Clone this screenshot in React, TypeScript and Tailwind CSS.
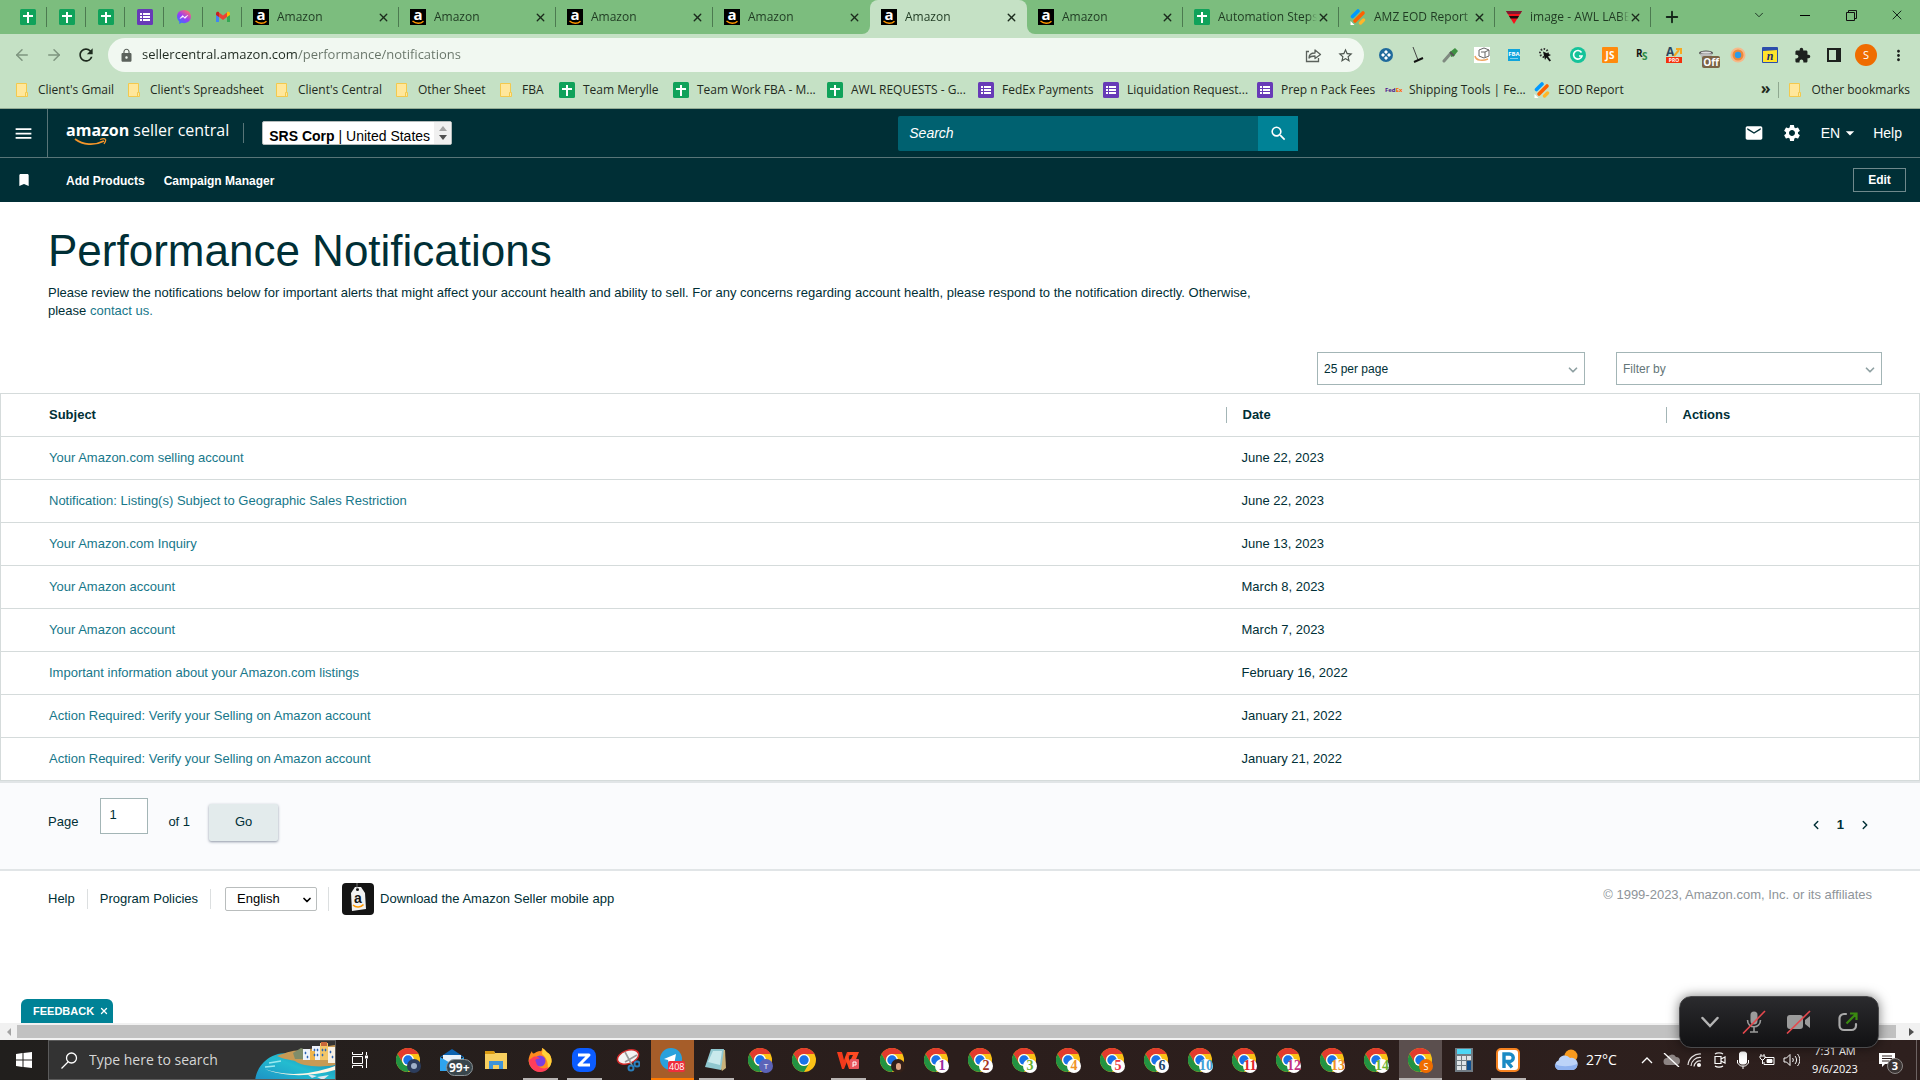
import React from "react";
import {
  MdMail,
  MdSettings,
  MdSearch,
  MdMenu,
  MdBookmark,
  MdLock,
  MdRefresh,
  MdExtension,
  MdMoreVert,
  MdStarBorder,
  MdArrowDropDown,
} from "react-icons/md";
import { ArrowLeft, ArrowRight, ChevronDown, ChevronLeft, ChevronRight, Plus, X } from "lucide-react";

const UI = "font-['Open_Sans','Noto_Sans',sans-serif]";

/* ---------- small marks ---------- */

function SheetIcon() {
  return (
    <svg className="h-4 w-4 shrink-0" viewBox="0 0 16 16" aria-hidden="true">
      <rect width="16" height="16" rx="1.5" fill="#10a25a" />
      <path d="M7 3h2v3h4v2H9v6H7V8H3V6h4z" fill="#fff" />
    </svg>
  );
}

function FormIcon() {
  return (
    <svg className="h-4 w-4 shrink-0" viewBox="0 0 16 16" aria-hidden="true">
      <rect width="16" height="16" rx="1.5" fill="#673ab7" />
      <path d="M3 4h2v2H3zM6 4h7v2H6zM3 7h2v2H3zM6 7h7v2H6zM3 10h2v2H3zM6 10h7v2H6z" fill="#fff" />
    </svg>
  );
}

function MessengerIcon() {
  return (
    <svg className="h-4 w-4 shrink-0" viewBox="0 0 16 16" aria-hidden="true">
      <defs>
        <linearGradient id="msg" x1="0" y1="1" x2="0.7" y2="0">
          <stop offset="0" stopColor="#1a84ff" />
          <stop offset="0.55" stopColor="#9a3cf5" />
          <stop offset="1" stopColor="#ff6a70" />
        </linearGradient>
      </defs>
      <path d="M8 1C4 1 1 3.800 1 7.600c0 2 .9 3.800 2.300 5V15l2.200-1.200c.8.200 1.600.4 2.500.4 4 0 7-2.800 7-6.600S12 1 8 1z" fill="url(#msg)" />
      <path d="M4 9.500l2.600-3 2 1.800 3.200-2-2.700 3.200-2-1.700z" fill="#fff" stroke="#fff" strokeWidth=".5" />
    </svg>
  );
}

function GmailIcon() {
  return (
    <svg className="h-4 w-4 shrink-0" viewBox="0 0 16 16" aria-hidden="true">
      <path d="M1 4v9h3V6z" fill="#4285f4" />
      <path d="M15 4v9h-3V6z" fill="#34a853" />
      <path d="M1 4.500C1 2.800 3 2.300 4 3.200V8L1 6z" fill="#c5221f" />
      <path d="M4 3.500L8 6.600l4-3.100V8L8 11 4 8z" fill="#ea4335" />
      <path d="M15 4.500c0-1.700-2-2.200-3-1.300V8l3-2z" fill="#fbbc04" />
    </svg>
  );
}

function AmazonIcon() {
  return (
    <span className="relative flex h-4 w-4 shrink-0 items-start justify-center bg-black font-['Open_Sans',sans-serif] text-[15px] leading-[10px] font-bold text-white">
      <span aria-hidden="true">a</span>
      <svg className="absolute inset-0" viewBox="0 0 16 16" aria-hidden="true">
        <path d="M2.500 12c3.500 3 8 3 11 .2" stroke="#f90" strokeWidth="1.400" fill="none" />
      </svg>
    </span>
  );
}

function JotformIcon() {
  return (
    <svg className="h-4 w-4 shrink-0" viewBox="0 0 16 16" aria-hidden="true">
      <path d="M2.500 7.500L8 2" stroke="#0099ff" strokeWidth="3.600" strokeLinecap="round" />
      <path d="M5 12l8-8" stroke="#ff6100" strokeWidth="3.600" strokeLinecap="round" />
      <path d="M10.500 14l3-3" stroke="#ffb629" strokeWidth="3.400" strokeLinecap="round" />
      <path d="M.5 12v4h4z" fill="#fff" />
    </svg>
  );
}

function AwlIcon() {
  return (
    <svg className="h-4 w-4 shrink-0" viewBox="0 0 16 16" aria-hidden="true">
      <path d="M0 2h16L8 15z" fill="#f7101c" />
      <path d="M0 2h16l-1.800 3H1.800z" fill="#7b1d32" />
      <path d="M3 7h10l-1.500 2.500h-7z" fill="#1b0b0d" />
    </svg>
  );
}

function FolderMark() {
  return (
    <svg className="h-4 w-4 shrink-0" viewBox="0 0 16 16" aria-hidden="true">
      <path d="M2.500 1.500h10v9h1v4h-11z" fill="#ffe79c" stroke="#f3c94d" />
      <path d="M11.500 14v-3.500h1" stroke="#f3c94d" fill="none" />
    </svg>
  );
}

function FedexIcon() {
  return (
    <span className="flex h-4 w-4 shrink-0 items-center text-[6px] font-bold" aria-hidden="true">
      <span className="text-[#4d148c]">Fed</span>
      <span className="text-[#ff6600]">Ex</span>
    </span>
  );
}

/* ---------- browser ---------- */

const pinned = [SheetIcon, SheetIcon, SheetIcon, FormIcon, MessengerIcon, GmailIcon];

type Tab = { title: string; icon: () => React.ReactElement; w: string; active?: boolean; noLine?: boolean };
const tabs: Tab[] = [
  { title: "Amazon", icon: AmazonIcon, w: "w-[157px]" },
  { title: "Amazon", icon: AmazonIcon, w: "w-[157px]" },
  { title: "Amazon", icon: AmazonIcon, w: "w-[157px]" },
  { title: "Amazon", icon: AmazonIcon, w: "w-[157px]", noLine: true },
  { title: "Amazon", icon: AmazonIcon, w: "w-[157px]", active: true },
  { title: "Amazon", icon: AmazonIcon, w: "w-[156px]" },
  { title: "Automation Steps", icon: SheetIcon, w: "w-[156px]" },
  { title: "AMZ EOD Report", icon: JotformIcon, w: "w-[156px]" },
  { title: "image - AWL LABEL", icon: AwlIcon, w: "w-[156px]" },
];

function TabStrip() {
  return (
    <div className="flex h-[34px] bg-[#7cbd7e] pl-2">
      {pinned.map((Icon, i) => (
        <button key={i} aria-label={`Pinned tab ${i + 1}`} className="flex w-[39px] items-center">
          <span className="flex flex-1 justify-center pl-px">
            <Icon />
          </span>
          <span className="h-5 w-px bg-[#4c7a50]" />
        </button>
      ))}
      {tabs.map((t, i) => (
        <div
          key={i}
          className={`relative flex items-center pl-[11px] ${t.w} ${t.active ? "rounded-t-lg bg-[#c5e1c5]" : ""}`}
        >
          {t.active && (
            <>
              <span className="absolute bottom-0 -left-2 h-2 w-2 bg-[#c5e1c5]">
                <span className="block h-2 w-2 rounded-br-lg bg-[#7cbd7e]" />
              </span>
              <span className="absolute -right-2 bottom-0 h-2 w-2 bg-[#c5e1c5]">
                <span className="block h-2 w-2 rounded-bl-lg bg-[#7cbd7e]" />
              </span>
            </>
          )}
          <t.icon />
          <button className="ml-2 min-w-0 flex-1 overflow-hidden mask-r-from-90% text-left whitespace-nowrap text-[#1f3a22]">
            {t.title}
          </button>
          <button aria-label={`Close ${t.title}`} className="mr-2 text-[#1b2a1c]">
            <X size={13} strokeWidth={2.5} />
          </button>
          <span className={`h-5 w-px ${t.active || t.noLine ? "" : "bg-[#4c7a50]"}`} />
        </div>
      ))}
      <button aria-label="New tab" className="ml-3 text-[#15261a]">
        <Plus size={18} strokeWidth={2.5} />
      </button>
      <div className="ml-auto flex text-[#12251a]">
        <button aria-label="Search tabs" className="flex w-[46px] items-center justify-center pb-1">
          <ChevronDown size={14} strokeWidth={1.5} />
        </button>
        <button aria-label="Minimize" className="flex w-[46px] items-center justify-center pb-1">
          <span className="h-px w-[10px] bg-black" />
        </button>
        <button aria-label="Restore" className="flex w-[46px] items-center justify-center pb-1">
          <svg width="11" height="11" viewBox="0 0 11 11" fill="none" stroke="#111">
            <path d="M.5 2.500h8v8h-8zM2.500 2.500v-2h8v8h-2" />
          </svg>
        </button>
        <button aria-label="Close window" className="flex w-[46px] items-center justify-center pb-1">
          <X size={16} strokeWidth={1.5} />
        </button>
      </div>
    </div>
  );
}

const extensions: { name: string; art: React.ReactNode }[] = [
  {
    name: "Helper",
    art: (
      <>
        <circle cx="8" cy="8" r="7" fill="#1f6a9c" />
        <path d="M8 3l2 2-2 2-2-2zM8 9l2 2-2 2-2-2zM3 8l2-2 2 2-2 2zM9 8l2-2 2 2-2 2z" fill="#fff" />
      </>
    ),
  },
  {
    name: "Broom",
    art: (
      <>
        <path d="M3 0l5 13" stroke="#444" />
        <path d="M4 15l9-4" stroke="#111" strokeWidth="2" />
      </>
    ),
  },
  {
    name: "Picker",
    art: (
      <>
        <path d="M2 14L9 6" stroke="#7f8a80" strokeWidth="3" strokeLinecap="round" />
        <path d="M8 5l5-4 3 3-4 5-3 1z" fill="#3f9142" />
        <path d="M8 5l4 4" stroke="#555" strokeWidth="2" />
      </>
    ),
  },
  {
    name: "Box",
    art: (
      <>
        <rect width="16" height="16" fill="#fff" />
        <path d="M5 3l5-2 5 2v6l-5 2-5-2zM7 5h4v5M11 5l4-2" fill="none" stroke="#666" />
        <path d="M1 9c1 5 8 5 13 3" stroke="#f0a660" strokeWidth="1.500" fill="none" />
      </>
    ),
  },
  {
    name: "FBA",
    art: (
      <>
        <rect x="2" y="2" width="12" height="12" fill="#10a4dc" />
        <text x="8" y="9" fontSize="6" fontWeight="700" fill="#fff" textAnchor="middle">FBA</text>
        <path d="M4 11.500h8" stroke="#7fd0ee" />
      </>
    ),
  },
  {
    name: "Clicker",
    art: (
      <>
        <circle cx="6" cy="6" r="4" fill="none" stroke="#333" strokeWidth="2" strokeDasharray="1.500 1.500" />
        <path d="M5 4.500l8 3.500-3 1.500 3 4-1.500 1-3-4-1.500 2.500z" fill="#111" />
      </>
    ),
  },
  {
    name: "Grammar",
    art: (
      <>
        <circle cx="8" cy="8" r="8" fill="#15c39a" />
        <path d="M11.500 5.500A4.300 4.300 0 1 0 12 9H9" fill="none" stroke="#fff" strokeWidth="1.600" />
      </>
    ),
  },
  {
    name: "Scripts",
    art: (
      <>
        <rect width="16" height="16" rx="1" fill="#ff8a0d" />
        <text x="8" y="12" fontSize="10" fontWeight="700" fill="#fff" textAnchor="middle">JS</text>
      </>
    ),
  },
  {
    name: "RS",
    art: (
      <>
        <text x="2" y="10" fontSize="10" fontWeight="700" fill="#111">R</text>
        <text x="8" y="13" fontSize="10" fontWeight="700" fill="#2c8c46">S</text>
      </>
    ),
  },
  {
    name: "Pro",
    art: (
      <>
        <text x="0" y="9" fontSize="12" fontWeight="700" fill="#2b4660">A</text>
        <path d="M8 9l5-6M10 2h5v5" stroke="#f6a821" strokeWidth="2" fill="none" />
        <rect y="10" width="16" height="6" fill="#f4300c" />
        <text x="8" y="15" fontSize="5" fontWeight="700" fill="#fff" textAnchor="middle">PRO</text>
      </>
    ),
  },
  {
    name: "Blocker",
    art: (
      <>
        <ellipse cx="8" cy="6" rx="7" ry="2.500" fill="#555" />
        <path d="M2 6.500h12l-1 6H4z" fill="#bcbcbc" />
        <ellipse cx="8" cy="5.500" rx="5" ry="1" fill="#ddd" />
      </>
    ),
  },
  {
    name: "Sphere",
    art: (
      <>
        <circle cx="8" cy="8" r="7.500" fill="#f6b98a" />
        <circle cx="8" cy="8" r="5.500" fill="#ef8a3a" />
        <circle cx="8" cy="8" r="3.200" fill="#2d9be8" />
      </>
    ),
  },
  {
    name: "Notes",
    art: (
      <>
        <rect width="16" height="16" rx="1" fill="#2b4dab" />
        <path d="M1 4l14-1v12H1z" fill="#ffe32b" />
        <text x="8" y="13" fontSize="12" fontWeight="700" fontStyle="italic" fill="#1c2b70" textAnchor="middle" fontFamily="Liberation Serif">n</text>
      </>
    ),
  },
];

function Toolbar() {
  return (
    <div className="flex h-[38px] items-center bg-[#c5e1c5]">
      <button aria-label="Back" className="mt-[3px] ml-[13px] text-[#7e957f]"><ArrowLeft size={18} /></button>
      <button aria-label="Forward" className="mt-[3px] ml-[14px] text-[#7e957f]"><ArrowRight size={18} /></button>
      <button aria-label="Reload" className="mt-[3px] ml-[13px] text-[#1d2a1e]"><MdRefresh size={20} /></button>
      <div className="mt-1 ml-3 flex h-[34px] min-w-0 flex-1 items-center rounded-full bg-[#f1f8f1] pr-[10px] pl-[11px]">
        <MdLock size={15} className="text-[#5b625c]" />
        <input
          aria-label="Address"
          className="ml-2 min-w-0 flex-1 bg-[linear-gradient(90deg,#1f2a20_156px,#667367_156px)] bg-clip-text text-[13px] text-transparent"
          defaultValue="sellercentral.amazon.com/performance/notifications"
        />
        <button aria-label="Share" className="mr-[15px]">
          <svg width="17" height="16" viewBox="0 0 17 16" fill="none" stroke="#5b625c" strokeWidth="1.300">
            <path d="M4 4.500H1.500v10h12V11" />
            <path d="M4 11c0-3.500 2.500-5 6-5V3l5.500 4.500L10 11.500V9c-3 0-4.500 0-6 2z" strokeLinejoin="round" />
          </svg>
        </button>
        <button aria-label="Bookmark this page"><MdStarBorder size={17} className="text-[#4c544d]" /></button>
      </div>
      <div className="mt-1 ml-[6px] flex">
        {extensions.map((e) => (
          <button key={e.name} aria-label={e.name} className="relative flex w-8 justify-center">
            <svg width="16" height="16" viewBox="0 0 16 16">{e.art}</svg>
            {e.name === "Blocker" && (
              <span className="absolute top-[9px] right-[2px] rounded-xs bg-[#7b6446] px-px text-[10px] leading-3 font-bold text-white">
                Off
              </span>
            )}
          </button>
        ))}
        <button aria-label="Extensions" className="flex w-8 justify-center"><MdExtension size={17} className="text-[#1d211e]" /></button>
        <button aria-label="Side panel" className="flex w-8 justify-center">
          <span className="mt-px h-[14px] w-[14px] border-2 border-r-[5px] border-[#1d211e]" />
        </button>
        <button aria-label="Profile" className="flex w-8 items-center justify-center">
          <span className="-my-1 flex h-[22px] w-[22px] items-center justify-center rounded-full bg-[#ef6c00] text-[11px] text-white">S</span>
        </button>
        <button aria-label="Menu" className="mr-[6px] flex w-8 justify-center"><MdMoreVert size={17} className="text-[#1d211e]" /></button>
      </div>
    </div>
  );
}

const bookmarks: { label: string; icon: () => React.ReactElement; w: string }[] = [
  { label: "Client's Gmail", icon: FolderMark, w: "w-[112px]" },
  { label: "Client's Spreadsheet", icon: FolderMark, w: "w-[148px]" },
  { label: "Client's Central", icon: FolderMark, w: "w-[120px]" },
  { label: "Other Sheet", icon: FolderMark, w: "w-[104px]" },
  { label: "FBA", icon: FolderMark, w: "w-[61px]" },
  { label: "Team Merylle", icon: SheetIcon, w: "w-[114px]" },
  { label: "Team Work FBA - M...", icon: SheetIcon, w: "w-[154px]" },
  { label: "AWL REQUESTS - G...", icon: SheetIcon, w: "w-[151px]" },
  { label: "FedEx Payments", icon: FormIcon, w: "w-[125px]" },
  { label: "Liquidation Request...", icon: FormIcon, w: "w-[154px]" },
  { label: "Prep n Pack Fees", icon: FormIcon, w: "w-[128px]" },
  { label: "Shipping Tools | Fe...", icon: FedexIcon, w: "w-[149px]" },
  { label: "EOD Report", icon: JotformIcon, w: "w-[110px]" },
];

function BookmarksBar() {
  return (
    <div className="flex h-[37px] items-center border-b border-[#93ab94] bg-[#c5e1c5] pl-[14px] text-[#1f2a20]">
      {bookmarks.map((b) => (
        <a key={b.label} href="#" className={`flex items-center gap-2 whitespace-nowrap ${b.w}`}>
          <b.icon />
          {b.label}
        </a>
      ))}
      <button aria-label="More bookmarks" className="ml-auto pb-1 text-base leading-4 font-bold">»</button>
      <span className="mx-2 h-4 w-px bg-[#8fa890]" />
      <a href="#" className="mr-[10px] flex items-center gap-2">
        <FolderMark />
        Other bookmarks
      </a>
    </div>
  );
}

/* ---------- seller central ---------- */

function SiteHeader() {
  return (
    <header className="bg-[#002f36] text-white">
      <div className="flex h-[49px] items-center border-b border-[#587578]">
        <button aria-label="Menu" className="flex h-12 w-12 items-center justify-center border-r border-[#587578]">
          <MdMenu size={21} />
        </button>
        <a href="#" aria-label="amazon seller central" className="ml-[18px] flex h-6 items-start gap-1 font-['Open_Sans',sans-serif] text-base leading-[18px] whitespace-nowrap">
          <span className="relative font-bold">
            amazon
            <svg className="absolute top-[17px] left-2" width="36" height="8" viewBox="0 0 36 8" fill="none" stroke="#f5962a" strokeWidth="1.800">
              <path d="M1 1c8 6 19 7 29 2" />
              <path d="M26 1.500c3-1 5-.8 5.500 0s-.5 3-1.500 4.500" strokeWidth="1.300" />
            </svg>
          </span>
          <span>seller central</span>
        </a>
        <span className="ml-[14px] h-5 w-px bg-[#587578]" />
        <button className="ml-[18px] flex h-6 w-[190px] overflow-hidden rounded-xs border border-[#b5bcbc] bg-white text-left text-sm text-black">
          <span className="mt-[6px] flex-1 pl-[6px] leading-4 whitespace-nowrap">
            <b>SRS Corp</b> | United States
          </span>
          <span className="flex w-[17px] flex-col items-center justify-center gap-1 bg-[#f0f0f0]">
            <svg width="8" height="5" viewBox="0 0 8 5"><path d="M0 5l4-5 4 5z" fill="#a3a3a3" /></svg>
            <svg width="8" height="5" viewBox="0 0 8 5"><path d="M0 0l4 5 4-5z" fill="#505050" /></svg>
          </span>
        </button>
        <form className="ml-[446px] flex h-[35px] w-[400px]" onSubmit={(e) => e.preventDefault()}>
          <input
            aria-label="Search"
            placeholder="Search"
            className="min-w-0 flex-1 rounded-l-xs bg-[#006170] pl-[11px] text-sm placeholder:text-white placeholder:italic"
          />
          <button aria-label="Submit search" className="flex w-10 items-center justify-center bg-[#008296]">
            <MdSearch size={19} />
          </button>
        </form>
        <div className="mr-[18px] ml-auto flex items-center text-sm">
          <button aria-label="Messages"><MdMail size={20} /></button>
          <button aria-label="Settings" className="ml-[18px]"><MdSettings size={20} /></button>
          <button className="ml-[19px] flex items-center">
            EN <MdArrowDropDown size={20} />
          </button>
          <a href="#" className="ml-[13px]">Help</a>
        </div>
      </div>
      <nav className="flex h-[44px] items-center text-xs font-bold">
        <button aria-label="Bookmarks" className="ml-4"><MdBookmark size={16} /></button>
        <a href="#" className="mt-px ml-[34px]">Add Products</a>
        <a href="#" className="mt-px ml-[19px]">Campaign Manager</a>
        <button className="mr-[14px] ml-auto h-6 w-[53px] border border-[#6f898c]">Edit</button>
      </nav>
    </header>
  );
}

const rows = [
  ["Your Amazon.com selling account", "June 22, 2023"],
  ["Notification: Listing(s) Subject to Geographic Sales Restriction", "June 22, 2023"],
  ["Your Amazon.com Inquiry", "June 13, 2023"],
  ["Your Amazon account", "March 8, 2023"],
  ["Your Amazon account", "March 7, 2023"],
  ["Important information about your Amazon.com listings", "February 16, 2022"],
  ["Action Required: Verify your Selling on Amazon account", "January 21, 2022"],
  ["Action Required: Verify your Selling on Amazon account", "January 21, 2022"],
];

function PickBox({ label, options, tone, className }: { label: string; options: string[]; tone: string; className: string }) {
  return (
    <div className={`relative ${className}`}>
      <select aria-label={label} className={`h-[33px] w-full appearance-none border border-[#a3b5b6] bg-white pl-[6px] text-xs ${tone}`}>
        {options.map((o) => (
          <option key={o}>{o}</option>
        ))}
      </select>
      <ChevronDown size={14} strokeWidth={3} className="pointer-events-none absolute top-[11px] right-[5px] text-[#8fa1a3]" />
    </div>
  );
}

function Content() {
  return (
    <main className="text-[13px] text-[#002f36]">
      <div className="px-12 pt-[21px]">
        <h1 className="text-[44px] leading-[56px]">Performance Notifications</h1>
        <p className="mt-[5px] max-w-[1225px] leading-[18px]">
          Please review the notifications below for important alerts that might affect your account health and ability to
          sell. For any concerns regarding account health, please respond to the notification directly. Otherwise, please{" "}
          <a href="#" className="text-[#17778a]">contact us.</a>
        </p>
      </div>
      <div className="mt-8 mr-[38px] flex justify-end gap-[31px]">
        <PickBox label="Results per page" options={["25 per page", "50 per page"]} tone="text-[#002f36]" className="w-[268px]" />
        <PickBox label="Filter" options={["Filter by"]} tone="text-[#647678]" className="w-[266px]" />
      </div>
      <table className="mt-2 w-full table-fixed border-collapse border border-[#d5dbdb] text-left">
        <thead>
          <tr className="h-[43px] border-b border-[#d5dbdb]">
            <th className="pl-12">Subject</th>
            <th className="w-[440px]"><span className="block border-l border-[#a3b5b6] pl-4 leading-4">Date</span></th>
            <th className="w-[254px]"><span className="block border-l border-[#a3b5b6] pl-4 leading-4">Actions</span></th>
          </tr>
        </thead>
        <tbody>
          {rows.map(([subject, date], i) => (
            <tr key={i} className="h-[43px] border-b border-[#d5dbdb]">
              <td className="pl-12"><a href="#" className="text-[#17778a]">{subject}</a></td>
              <td className="pl-4">{date}</td>
              <td />
            </tr>
          ))}
        </tbody>
      </table>
      <form className="flex h-[90px] items-center border-y-2 border-[#e1e5e7] bg-[#fafbfd] px-12 pb-2" onSubmit={(e) => e.preventDefault()}>
        <label htmlFor="page">Page</label>
        <input id="page" defaultValue="1" className="mb-3 ml-[22px] h-9 w-12 border border-[#a3b5b6] bg-white pb-1 pl-2" />
        <span className="ml-5">of 1</span>
        <button className="ml-[19px] h-[37px] w-[69px] rounded-xs bg-[#e3ebec] shadow-sm shadow-gray-400">Go</button>
        <div className="mt-[6px] ml-auto flex items-center gap-[14px]">
          <button type="button" aria-label="Previous page"><ChevronLeft size={14} strokeWidth={2.500} /></button>
          <b>1</b>
          <button type="button" aria-label="Next page"><ChevronRight size={14} strokeWidth={2.500} /></button>
        </div>
      </form>
      <footer className="flex items-center px-12 pt-3">
        <a href="#">Help</a>
        <span className="mx-3 h-5 w-px bg-[#dcdfe0]" />
        <a href="#">Program Policies</a>
        <span className="mx-3 h-5 w-px bg-[#dcdfe0]" />
        <div className="relative ml-[2px]">
          <select aria-label="Language" className="h-6 w-[92px] appearance-none rounded-xs border border-[#b9bdbd] bg-white pl-[11px] text-[13px] text-black">
            <option>English</option>
          </select>
          <ChevronDown size={12} strokeWidth={3.500} className="pointer-events-none absolute top-[7px] right-1 text-black" />
        </div>
        <span className="mx-[11px] h-6 w-px bg-[#dcdfe0]" />
        <a href="#" className="ml-[2px] flex items-center gap-[6px]">
          <span className="flex h-8 w-8 items-center justify-center rounded-sm bg-[#141414]">
            <svg width="32" height="32" viewBox="0 0 32 32" aria-hidden="true">
              <path d="M9 10l4-6h6l4 6 1 16-14 2z" fill="#f2f2f2" />
              <circle cx="15.500" cy="6.500" r="1.500" fill="#141414" />
              <path d="M15 0v6" stroke="#8a8a8a" strokeWidth=".8" />
              <text x="16" y="20" fontSize="14" fontWeight="700" textAnchor="middle" fill="#141414">a</text>
              <path d="M11 22c3 3 8 2.500 10.500-.5" stroke="#f90" strokeWidth="1.500" fill="none" />
            </svg>
          </span>
          Download the Amazon Seller mobile app
        </a>
        <span className="mb-2 ml-auto text-[#8e9499]">© 1999-2023, Amazon.com, Inc. or its affiliates</span>
      </footer>
    </main>
  );
}

/* ---------- taskbar ---------- */

function Chrome() {
  return (
    <svg width="24" height="24" viewBox="0 0 24 24" aria-hidden="true">
      <circle cx="12" cy="12" r="12" fill="#fbc116" />
      <path d="M1.600 6A12 12 0 0 1 22.400 6H12a6 6 0 0 0-5.200 9z" fill="#e33b2e" />
      <path d="M1.600 6A12 12 0 0 0 12 24l5.200-9A6 6 0 0 1 6.800 15z" fill="#229342" />
      <circle cx="12" cy="12" r="6" fill="#fff" />
      <circle cx="12" cy="12" r="4.700" fill="#1a73e8" />
    </svg>
  );
}

function ChromeWith({ children, badge }: { children?: React.ReactNode; badge: string }) {
  return (
    <span className="relative block h-6 w-6">
      <Chrome />
      <span className={`absolute -right-px -bottom-px flex h-[14px] w-[14px] items-center justify-center rounded-full leading-none ${badge}`}>
        {children}
      </span>
    </span>
  );
}

function Num({ n, tone }: { n: string; tone: string }) {
  return (
    <ChromeWith badge="bg-white">
      <span className={`font-['Liberation_Serif',serif] text-[14px] font-bold ${tone}`}>{n}</span>
    </ChromeWith>
  );
}

type Task = { name: string; art: React.ReactNode; line?: string; bg?: string };
const tasks: Task[] = [
  {
    name: "Chrome profile",
    art: (
      <ChromeWith badge="bg-[#2c3d5d]">
        <span className="h-[6px] w-[6px] rounded-full bg-[#9fb1c9]" />
      </ChromeWith>
    ),
  },
  {
    name: "Mail",
    art: (
      <span className="relative block">
        <svg width="24" height="24" viewBox="0 0 24 24">
          <path d="M0 9l12-8 12 8z" fill="#0d63b0" />
          <path d="M3 7h18v9H3z" fill="#e9f2fa" />
          <path d="M0 9l12 7 12-7v14H0z" fill="#2fa4ee" />
        </svg>
        <span className="absolute top-[11px] left-[6px] rounded-full border border-[#8b9296] bg-[#39464c] px-[2px] text-[12px] leading-[15px] font-bold text-white">
          99+
        </span>
      </span>
    ),
  },
  {
    name: "File Explorer",
    art: (
      <svg width="24" height="24" viewBox="0 0 24 24">
        <path d="M1 3h9l1 2h12v16H1z" fill="#f7cf5f" />
        <path d="M1 3h9l1 3H1z" fill="#d99a12" />
        <path d="M5 21v-8h14v8h-4v-4H9v4z" fill="#3e93d8" />
      </svg>
    ),
  },
  {
    name: "Firefox",
    line: "bg-[#b8b4b3]",
    art: (
      <svg width="24" height="24" viewBox="0 0 24 24">
        <path d="M12 3c2 1 2-2 2-3 4 2 4 4 6 5 2 1 4 5 3.500 9A11.600 11.600 0 0 1 .5 13C.5 9 2 6 4 3c0 2 1 3 3 2 1-1 3-2 5-2z" fill="#ff8a1e" />
        <path d="M14 0c4 2 4 4 6 5 2 1 4 5 3.500 9-.4 3-2 5-4 7 1-4 0-11-5.500-15 0-2 1-4 0-6z" fill="#ffd23a" />
        <circle cx="12" cy="13" r="5.500" fill="#7a3fe0" />
        <path d="M1 12c0 6 4 12 11 12s9-5 9-5c-5 3-12 1-13-5-2-3 2-4 4-3-2-3-6-3-8-1z" fill="#ff3d5a" />
      </svg>
    ),
  },
  {
    name: "Zoom",
    line: "bg-[#b8b4b3]",
    art: (
      <svg width="24" height="24" viewBox="0 0 24 24">
        <rect width="24" height="24" rx="8" fill="#0b5cff" />
        <path d="M6 7h11L7 17h11" stroke="#fff" strokeWidth="3" fill="none" strokeLinejoin="round" />
      </svg>
    ),
  },
  {
    name: "Snipping Tool",
    art: (
      <svg width="24" height="24" viewBox="0 0 24 24">
        <ellipse cx="12" cy="9" rx="11" ry="6.500" transform="rotate(-20 12 9)" fill="#f4f4f4" stroke="#d22a2a" strokeWidth="1.500" />
        <path d="M9 4l7 13M21 7L9 14" stroke="#9a9a9a" strokeWidth="1.600" />
        <circle cx="15" cy="20" r="2.500" fill="none" stroke="#2a7fbd" strokeWidth="2" />
        <circle cx="21" cy="16" r="2.500" fill="none" stroke="#2a7fbd" strokeWidth="2" />
      </svg>
    ),
  },
  {
    name: "Telegram",
    bg: "bg-[#a65d29]",
    line: "bg-[#ff7a00]",
    art: (
      <span className="relative block">
        <svg width="24" height="24" viewBox="0 0 24 24">
          <circle cx="11" cy="11" r="11" fill="#2aa1dc" />
          <path d="M4 11l12-5-2 11-4-3-1 2-1-4z" fill="#fff" />
        </svg>
        <span className="absolute top-[13px] left-2 rounded-xs bg-[#ee2f3c] px-px text-[9px] leading-[11px] text-white">408</span>
      </span>
    ),
  },
  {
    name: "Notepad",
    line: "bg-[#b8b4b3]",
    art: (
      <svg width="24" height="24" viewBox="0 0 24 24">
        <path d="M8 2h13l1 18-4 3z" fill="#c9b27a" />
        <path d="M7 1h13l-3 21-16-3z" fill="#8fc7cf" />
        <path d="M9 3h9l-2 14-12-3z" fill="#c9e9ec" />
      </svg>
    ),
  },
  {
    name: "Chrome T",
    art: <ChromeWith badge="bg-[#5c63b8] text-[8px] text-white">T</ChromeWith>,
  },
  { name: "Chrome", art: <Chrome /> },
  {
    name: "WPS",
    line: "bg-[#b8b4b3]",
    art: (
      <svg width="24" height="24" viewBox="0 0 24 24">
        <path d="M1 4h5l2 8 3-8h4l-7 17H6z" fill="#f33a1c" />
        <path d="M12 4h11l-7 17h-3L9 10l2-4 3 7 3-6h-5z" fill="#ff4a22" />
        <rect x="14" y="11" width="9" height="10" rx="1" fill="#e9545c" />
        <path d="M17 19v-5h3v3h-3" stroke="#fff" fill="none" />
      </svg>
    ),
  },
  {
    name: "Chrome photo",
    art: (
      <ChromeWith badge="bg-[#33201a]">
        <span className="h-[7px] w-[5px] rounded-full bg-[#e0a684]" />
      </ChromeWith>
    ),
  },
  { name: "Chrome 1", art: <Num n="1" tone="text-[#9b2a9e]" /> },
  { name: "Chrome 2", art: <Num n="2" tone="text-[#a8321d]" /> },
  { name: "Chrome 3", art: <Num n="3" tone="text-[#6cb22e]" /> },
  { name: "Chrome 4", art: <Num n="4" tone="text-[#f09326]" /> },
  { name: "Chrome 5", art: <Num n="5" tone="text-[#ea3340]" /> },
  { name: "Chrome 6", art: <Num n="6" tone="text-[#23466b]" /> },
  { name: "Chrome 10", art: <Num n="10" tone="text-[#3f9fd6]" /> },
  { name: "Chrome 11", art: <Num n="11" tone="text-[#e3262b]" /> },
  { name: "Chrome 12", art: <Num n="12" tone="text-[#c42f83]" /> },
  { name: "Chrome 13", art: <Num n="13" tone="text-[#f09326]" /> },
  { name: "Chrome 14", art: <Num n="14" tone="text-[#6cb22e]" /> },
  {
    name: "Chrome S",
    bg: "bg-[#5b4f4e]",
    line: "bg-[#b8b4b3]",
    art: <ChromeWith badge="bg-[#ef6c00] text-[9px] text-white">S</ChromeWith>,
  },
  {
    name: "Calculator",
    art: (
      <svg width="18" height="24" viewBox="0 0 18 24">
        <rect width="18" height="24" fill="#717b83" />
        <rect x="2" y="1" width="14" height="5" fill="#4cd6f5" />
        <path d="M2 8h4v4H2zM7 8h4v4H7zM12 8h4v4h-4zM2 13h4v4H2zM7 13h4v4H7zM2 18h4v4H2zM7 18h4v4H7z" fill="#dfe4e8" />
        <rect x="12" y="13" width="4" height="9" fill="#0f4f8f" />
      </svg>
    ),
  },
  {
    name: "R app",
    line: "bg-[#b8b4b3]",
    art: (
      <svg width="24" height="24" viewBox="0 0 24 24">
        <rect x="1" y="1" width="22" height="22" rx="4" fill="#fff" stroke="#f58220" strokeWidth="2" />
        <path d="M8 20V6h5.500a3.500 3.500 0 0 1 0 7.500H11l5 6" stroke="#1a8ac4" strokeWidth="3.400" fill="none" />
      </svg>
    ),
  },
];

function HarborArt() {
  return (
    <svg className="h-full w-20" viewBox="0 0 80 38" preserveAspectRatio="none" aria-hidden="true">
      <defs>
        <linearGradient id="sea" x1="0" y1="1" x2="1" y2="0">
          <stop offset="0" stopColor="#1d8fc4" />
          <stop offset="0.5" stopColor="#23bcd0" />
          <stop offset="1" stopColor="#1577ad" />
        </linearGradient>
      </defs>
      <path d="M0 40C2 24 14 12 32 12l48-2v30z" fill="url(#sea)" />
      <path d="M22 15c10-4 18-6 26-6l32-5v20c-16 3-34 1-40-4-4-1-12-2-18-5z" fill="#c79a55" />
      <path d="M38 12l8-5 10 4-2 7H40z" fill="#7f8d6b" />
      <path d="M48 8h7v11h-7zM57 5h8v14h-8z" fill="#eef3fa" />
      <path d="M55 10h5v9h-5z" fill="#f0b54c" />
      <path d="M65 2h8v17h-8z" fill="#f2c668" />
      <path d="M73 6h7v16h-7z" fill="#f7f0e2" />
      <path d="M66 1h6v4h-6z" fill="#c9683a" />
      <path d="M59 8h1v2h-1zM62 8h1v2h-1zM59 13h1v2h-1zM62 13h1v2h-1zM50 11h1v2h-1zM52 15h1v2h-1zM67 8h1v2h-1zM70 8h1v2h-1zM67 13h1v2h-1zM75 10h1v2h-1zM77 15h1v2h-1z" fill="#2f66b5" stroke="#2f66b5" strokeWidth=".5" />
      <path d="M10 28c16 6 40 8 70-3v4c-24 7-52 7-70-1z" fill="#fff7e6" />
      <path d="M52 33l10 2-5 2zM62 36l12-2-6 5z" fill="#dbe8ef" />
      <path d="M14 22l12-2M10 26l10-1" stroke="#9be9f0" strokeWidth="1.500" />
    </svg>
  );
}

const tray: { name: string; art: React.ReactElement }[] = [
  {
    name: "Show hidden icons",
    art: <svg width="12" height="12" viewBox="0 0 12 12" fill="none" stroke="#fff" strokeWidth="1.300"><path d="M1 9l5-5 5 5" /></svg>,
  },
  {
    name: "Cloud storage",
    art: (
      <svg width="17" height="14" viewBox="0 0 17 14">
        <path d="M4 12a3.500 3.500 0 0 1 0-7 5 5 0 0 1 9-1 4 4 0 0 1 0 8z" fill="#8d8584" />
        <path d="M1 0l15 14" stroke="#fff" strokeWidth="1.300" />
      </svg>
    ),
  },
  {
    name: "Network",
    art: (
      <svg width="16" height="16" viewBox="0 0 16 16" fill="none" stroke="#e9e5e4" strokeWidth="1.200">
        <path d="M1 13A12 12 0 0 1 14 2M4 14A9 9 0 0 1 14 5.500M7 14.500A6 6 0 0 1 14 9" />
        <circle cx="12" cy="13" r="1.500" fill="#fff" />
      </svg>
    ),
  },
  {
    name: "Meet now",
    art: (
      <svg width="14" height="16" viewBox="0 0 14 16" fill="none" stroke="#fff" strokeWidth="1.200">
        <path d="M3 4.500h6v7H3zM9 7l4-2v6L9 9M3 2c2-1.500 6-1.500 8 0M3 14c2 1.500 6 1.500 8 0" />
      </svg>
    ),
  },
  {
    name: "Microphone",
    art: (
      <svg width="16" height="18" viewBox="0 0 16 18" fill="none" stroke="#fff">
        <rect x="4.500" y="1" width="7" height="12" rx="2" fill="#fff" />
        <path d="M2.500 9v3l3 3h5l3-3V9M8 15v3" />
      </svg>
    ),
  },
  {
    name: "Battery",
    art: (
      <svg width="17" height="14" viewBox="0 0 17 14" fill="none" stroke="#fff">
        <path d="M6 4.500h9v7H5V9" />
        <path d="M8 6.500h5v3H8z" fill="#fff" />
        <path d="M1 3h5v2L4 7H3L1 5zM2 1v2M5 1v2M3.500 7v4" />
      </svg>
    ),
  },
  {
    name: "Volume",
    art: (
      <svg width="17" height="14" viewBox="0 0 17 14" fill="none" stroke="#fff">
        <path d="M1 5h2.500L7 1.500v11L3.500 9H1zM9.500 5c1 1.200 1 2.800 0 4M12 3c2 2.400 2 5.600 0 8M14.500 1c3 3.600 3 8.400 0 12" />
      </svg>
    ),
  },
];

function Taskbar() {
  return (
    <div className="flex h-10 bg-linear-to-r from-[#211f1d] via-[#2b1e1c] to-[#2e201e] text-white">
      <button aria-label="Start" className="flex w-12 shrink-0 items-center justify-center">
        <svg width="16" height="16" viewBox="0 0 16 16">
          <path d="M0 2l6.500-1v6.500H0zM7.500 1L16 0v7.500H7.500zM0 8.500h6.500V15L0 14zM7.500 8.500H16V16l-8.500-1z" fill="#fff" />
        </svg>
      </button>
      <label className="flex w-72 shrink-0 items-center border border-[#5b5b5b] bg-[#333] pl-3">
        <svg width="17" height="17" viewBox="0 0 17 17" fill="none" stroke="#fff" strokeWidth="1.300">
          <circle cx="10.500" cy="6" r="5" />
          <path d="M7 10l-6.500 6.500" />
        </svg>
        <input
          aria-label="Type here to search"
          placeholder="Type here to search"
          className="ml-[11px] w-0 flex-1 bg-transparent text-sm placeholder:text-[#d6d6d6]"
        />
        <HarborArt />
      </label>
      <button aria-label="Task view" className="mr-[2px] flex w-12 items-center justify-center">
        <svg width="16" height="16" viewBox="0 0 16 16" fill="none" stroke="#fff">
          <path d="M.5 0v2.500h10V0M.5 4.500h10v7H.5zM.5 16v-2.500h10V16M14.500 0v3M14.500 7v9" />
          <path d="M13 3.500h3v3h-3z" fill="#fff" stroke="none" />
        </svg>
      </button>
      {tasks.map((t) => (
        <button key={t.name} aria-label={t.name} className="relative flex w-11 justify-center">
          <span className={`flex h-full w-[43px] items-center justify-center ${t.bg ?? ""}`}>{t.art}</span>
          {t.line && <span className={`absolute bottom-0 h-[2px] ${t.bg ? "w-[43px]" : "w-[35px]"} ${t.line}`} />}
        </button>
      ))}
      <button className="ml-[24px] flex items-center gap-2 text-sm whitespace-nowrap">
        <svg width="24" height="22" viewBox="0 0 24 22">
          <circle cx="17" cy="7" r="6.500" fill="#f79a1e" />
          <path d="M5 21a5 5 0 0 1-.5-9.500A6.500 6.500 0 0 1 16 9a6 6 0 0 1 3 12z" fill="#bcd3f8" />
          <path d="M5 21a5 5 0 0 1-4-6c5 3 15 3 22 0a5 5 0 0 1-4 6z" fill="#8fb2ef" />
        </svg>
        27°C
      </button>
      <div className="mr-[3px] ml-auto flex items-center">
        {tray.map((t) => (
          <button key={t.name} aria-label={t.name} className="flex w-6 justify-center">
            {t.art}
          </button>
        ))}
        <div className="w-16 text-center text-[11px] leading-[18px] whitespace-nowrap">
          <div>7:31 AM</div>
          <div>9/6/2023</div>
        </div>
        <button aria-label="3 notifications" className="relative mr-[21px] ml-3 block">
          <svg width="16" height="16" viewBox="0 0 16 16">
            <path d="M0 1h16v11H6l-3 3v-3H0z" fill="#fff" />
            <path d="M3 4h10M3 6.500h10M3 9h7" stroke="#2e201e" />
          </svg>
          <span className="absolute top-[6px] left-2 flex h-4 w-4 items-center justify-center rounded-full border border-[#8b8685] bg-[#3a3433] text-[11px] font-bold">
            3
          </span>
        </button>
        <span className="h-10 w-px bg-[#6d6362]" />
      </div>
    </div>
  );
}

function CallOverlay() {
  return (
    <div className="absolute right-[41px] bottom-8 flex h-[52px] w-[200px] items-center justify-between rounded-xl border border-[#4a4a4c] bg-linear-to-b from-[#2b2b2e] to-[#111113] pr-5 pl-[21px] shadow-[0_0_12px_rgba(0,0,0,0.5)]">
      <button aria-label="Collapse">
        <svg width="18" height="12" viewBox="0 0 18 12" fill="none" stroke="#b4b4b4" strokeWidth="2.500" strokeLinecap="round"><path d="M1.500 2L9 10l7.500-8" /></svg>
      </button>
      <button aria-label="Unmute" className="ml-1">
        <svg width="24" height="24" viewBox="0 0 24 24" fill="none" stroke="#9b9b9b" strokeWidth="1.600">
          <rect x="8.500" y="1.500" width="7" height="13" rx="3.500" fill="#9b9b9b" stroke="none" />
          <path d="M5.500 10c0 9 13 9 13 0M12 17v5M8 22h8" />
          <path d="M1 23.500L23 1" stroke="#e5484d" />
        </svg>
      </button>
      <button aria-label="Start video">
        <svg width="25" height="24" viewBox="0 0 25 24">
          <rect x="1" y="5" width="16" height="14" rx="3" fill="#9b9b9b" />
          <path d="M19 10l5-4v12l-5-4z" fill="#9b9b9b" />
          <path d="M1 23.500L24 1" stroke="#e5484d" strokeWidth="1.600" />
        </svg>
      </button>
      <button aria-label="Open in window" className="ml-2">
        <svg width="20" height="20" viewBox="0 0 20 20" fill="none" strokeWidth="2.200">
          <path d="M8 2H6a4.500 4.500 0 0 0-4.500 4.500v7A4.500 4.500 0 0 0 6 18h7.500a4.500 4.500 0 0 0 4.500-4.500V12" stroke="#a9a9a9" strokeLinecap="round" />
          <path d="M8.500 11.500L18 2M12 1.500h6.500V8" stroke="#3a8a10" />
        </svg>
      </button>
    </div>
  );
}

export default function App() {
  return (
    <div className="relative flex min-h-screen flex-col bg-white font-['Liberation_Sans',Arial,sans-serif]">
      <div className={`text-xs ${UI}`}>
        <TabStrip />
        <Toolbar />
        <BookmarksBar />
      </div>
      <SiteHeader />
      <Content />
      <button className="mt-auto ml-[21px] flex h-6 w-[92px] items-center gap-[5px] rounded-t-md bg-[#008296] pl-3 text-[11px] font-bold text-white">
        FEEDBACK <X size={10} strokeWidth={3} />
      </button>
      <div className="flex h-[17px] items-center bg-[#f1f1f1]">
        <span className="flex w-[17px] justify-center">
          <svg width="4" height="8" viewBox="0 0 4 8"><path d="M4 0v8L0 4z" fill="#a3a3a3" /></svg>
        </span>
        <span className="h-[13px] flex-1 bg-[#c1c1c1]" />
        <span className="flex w-6 justify-end pr-[6px]">
          <svg width="5" height="8" viewBox="0 0 5 8"><path d="M0 0v8l5-4z" fill="#505050" /></svg>
        </span>
      </div>
      <div className={UI}>
        <Taskbar />
      </div>
      <CallOverlay />
    </div>
  );
}
